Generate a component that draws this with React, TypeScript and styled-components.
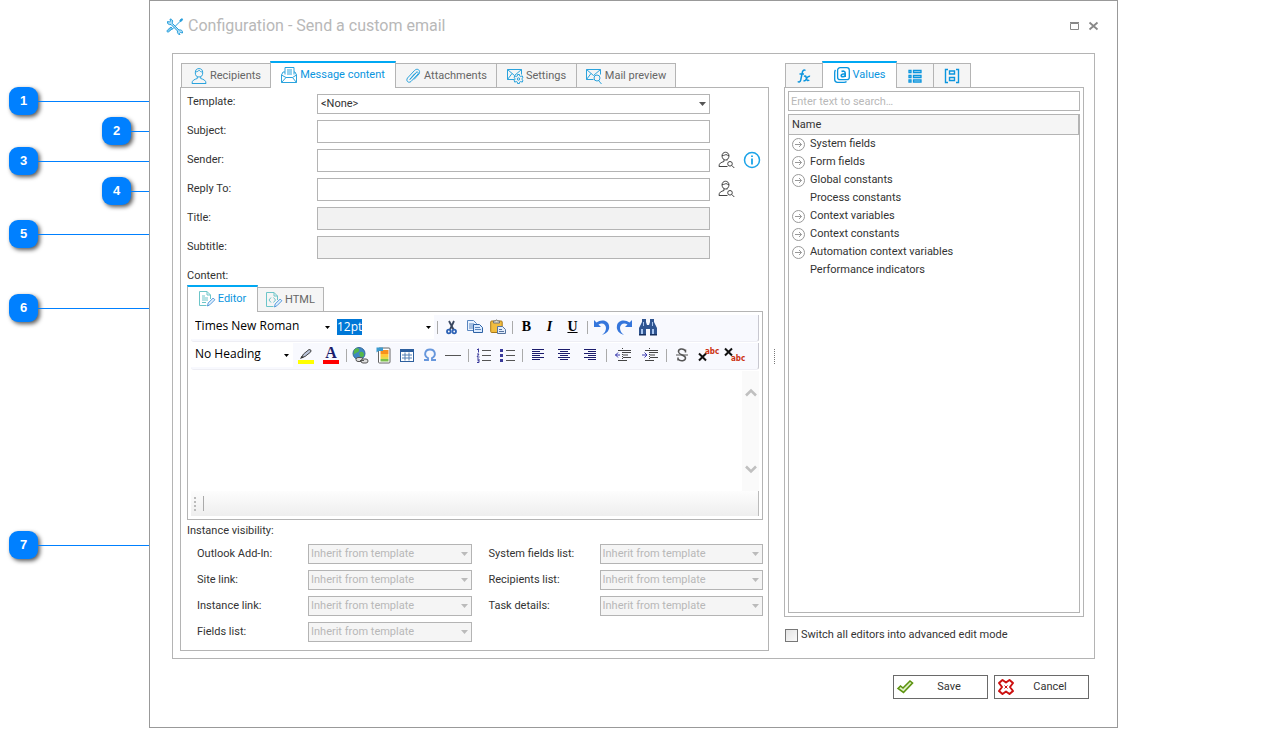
import React from "react";
import styled, { createGlobalStyle, css } from "styled-components";

const accent = "#00a8f3";
const blue = "#0a95de";
const line = "#b4b4b4";
const muted = "#b8b8b8";
const ui = 'Roboto, "DejaVu Sans Condensed", sans-serif';
const editorFont = '"Open Sans", "Noto Sans", sans-serif';

const GlobalStyle = createGlobalStyle`
  *, *::before, *::after { box-sizing: border-box; }
  body { margin: 0; background: #fff; color: #333; font: 11px/16px ${ui}; }
  button, input, select, textarea { font: inherit; color: inherit; margin: 0; border-radius: 0; outline: none; }
  svg { display: block; flex: none; overflow: visible; }
`;

/* ---------- page ---------- */
const Page = styled.div`
  display: flex;
  align-items: flex-start;
`;
const Rail = styled.ol`
  width: 149px;
  flex: none;
  margin: 0;
  padding: 86px 0 0;
  list-style: none;
`;
const Callout = styled.li<{ $indent?: boolean; $gap?: number }>`
  display: flex;
  align-items: center;
  height: 30px;
  margin-top: ${(p) => p.$gap || 0}px;
  padding-left: ${(p) => (p.$indent ? 102 : 9)}px;
  &::after {
    content: "";
    flex: 1;
    height: 1px;
    background: #0080ff;
  }
`;
const Badge = styled.span`
  width: 29px;
  height: 28px;
  border-radius: 9px;
  background: #0080ff;
  box-shadow: 2px 2px 4px rgba(0, 0, 0, 0.65);
  color: #fff;
  font: bold 13px/28px "Liberation Sans", sans-serif;
  text-align: center;
`;

/* ---------- dialog ---------- */
const Dialog = styled.main`
  flex: 1;
  min-width: 0;
  margin-right: 147px;
  padding: 0 22px;
  border: 1px solid #999;
`;
const TitleBar = styled.header`
  display: flex;
  align-items: center;
  height: 52px;
  margin: 0 -8px 0 -6px;
  padding-bottom: 2px;
`;
const Title = styled.h1`
  flex: 1;
  margin: 0 0 0 4px;
  font-size: 16px;
  line-height: 24px;
  font-weight: normal;
  color: ${muted};
`;
const WindowButton = styled.button`
  width: 19px;
  height: 18px;
  padding: 0;
  border: 0;
  background: none;
  display: grid;
  place-items: center;
`;
const Frame = styled.div`
  display: flex;
  padding: 7px 10px 7px 7px;
  border: 1px solid ${line};
`;
const Column = styled.section<{ $fixed?: boolean }>`
  display: flex;
  flex-direction: column;
  min-width: 0;
  ${(p) => (p.$fixed ? "width: 300px; flex: none;" : "flex: 1;")}
`;
const Splitter = styled.div`
  width: 15px;
  flex: none;
  display: flex;
  align-items: center;
  padding-left: 5px;
  &::before {
    content: "";
    width: 1px;
    height: 15px;
    background: repeating-linear-gradient(#777 0 1px, transparent 1px 2px);
  }
`;

/* ---------- tabs ---------- */
const Tabs = styled.div`
  display: flex;
  align-items: flex-end;
  height: 27px;
  margin-bottom: -1px;
  padding-left: 1px;
`;
const Tab = styled.button<{ $w: number; $active?: boolean }>`
  display: flex;
  align-items: center;
  justify-content: center;
  gap: 3px;
  width: ${(p) => p.$w}px;
  height: 25px;
  padding: 0;
  border: 1px solid ${line};
  background: #f5f5f5;
  color: #666;
  white-space: nowrap;
  & + & { margin-left: -1px; }
  ${(p) =>
    p.$active &&
    css`
      position: relative;
      height: 27px;
      padding-bottom: 2px;
      border-top: 2px solid ${accent};
      border-bottom: 0;
      background: #fff;
      color: ${blue};
    `}
`;
const Panel = styled.div`
  display: flex;
  flex-direction: column;
  flex: 1;
  border: 1px solid ${line};
`;
const FormPanel = styled(Panel)`
  padding: 5px 5px 8px 6px;
`;
const ValuesPanel = styled(Panel)`
  gap: 3px;
  padding: 3px;
`;

/* ---------- form ---------- */
const FormRow = styled.div<{ $compact?: boolean }>`
  display: grid;
  grid-template-columns: 130px 1fr 53px;
  align-items: start;
  height: ${(p) => (p.$compact ? 27 : 29)}px;
  padding-top: ${(p) => (p.$compact ? 1 : 0)}px;
`;
const Label = styled.label`
  line-height: 20px;
  white-space: nowrap;
`;
const FormLabel = styled(Label)<{ $compact?: boolean }>`
  line-height: ${(p) => (p.$compact ? 15 : 21)}px;
`;
const TextBox = styled.input`
  min-width: 0;
  width: 100%;
  height: 23px;
  padding: 0 4px;
  border: 1px solid ${line};
  background: #fff;
  &:disabled { background: #f2f2f2; }
`;
const SearchBox = styled(TextBox)`
  height: 20px;
  padding: 0 2px;
  &::placeholder { color: ${muted}; opacity: 1; }
`;
const RowActions = styled.div`
  display: flex;
  gap: 8px;
  padding: 2px 0 0 7px;
`;
const IconButton = styled.button`
  width: 18px;
  height: 18px;
  padding: 0;
  border: 0;
  background: none;
`;
const SelectBox = styled.div`
  display: grid;
  align-items: center;
  min-width: 0;
  & > * { grid-area: 1 / 1; }
  & > svg { justify-self: end; margin-right: 4px; pointer-events: none; }
`;
const Select = styled.select`
  appearance: none;
  width: 100%;
  height: 20px;
  padding: 0 14px 0 3px;
  border: 1px solid ${line};
  background: #fff;
  &:disabled { background: #f5f5f5; color: ${muted}; opacity: 1; padding-left: 2px; }
`;
const ContentLabel = styled(Label)`
  line-height: 16px;
  padding: 3px 0 1px;
`;
const VisibilityLabel = styled.div`
  line-height: 16px;
  padding: 3px 0 5px;
`;
const VisibilityGrid = styled.div`
  display: grid;
  grid-template-columns: 1fr 1fr;
  column-gap: 17px;
  padding-left: 10px;
`;
const VisibilityColumn = styled.div`
  display: grid;
  grid-template-columns: 111px 1fr;
  gap: 6px 0;
  align-content: start;
`;

/* ---------- editor ---------- */
const EditorTabs = styled(Tabs)`
  padding-left: 0;
`;
const EditorPanel = styled(Panel)`
  flex: none;
  padding: 3px;
`;
const Toolbar = styled.div`
  display: flex;
  align-items: center;
  height: 27px;
  padding-bottom: 2px;
  margin-bottom: 1px;
  background: #f8f9fe;
  border-right: 1px solid #c8c8d0;
  border-bottom: 1px solid #eeeef4;
  border-radius: 0 0 3px 3px;
  color: #000;
  font: 12px/18px ${editorFont};
`;
const ToolSelectBox = styled(SelectBox)<{ $w: number }>`
  width: ${(p) => p.$w}px;
  flex: none;
`;
const ToolSelect = styled.select`
  appearance: none;
  width: 100%;
  height: 24px;
  padding: 0 0 2px 4px;
  border: 0;
  background: #fff;
`;
const SizeBox = styled.span`
  width: 100px;
  display: flex;
  align-items: center;
  justify-content: space-between;
  height: 24px;
  padding: 0 3px;
  background: #fff;
`;
const SizeInput = styled.input`
  width: 25px;
  height: 16px;
  padding: 0;
  border: 0;
  background: #0078d7;
  color: #fff;
`;
const Sep = styled.i`
  width: 6px;
  flex: none;
  display: grid;
  justify-content: center;
  &::before { content: ""; width: 1px; height: 13px; background: #aaa; }
`;
const Tool = styled.button<{ $w?: number }>`
  width: ${(p) => p.$w || 23}px;
  height: 24px;
  flex: none;
  padding: 0;
  border: 0;
  background: none;
  display: grid;
  place-items: center;
`;
const Glyph = styled(Tool)<{ $kind?: "i" | "u" }>`
  font: ${(p) => (p.$kind === "i" ? "italic " : "")}bold 14px/20px "Liberation Serif", serif;
  text-decoration: ${(p) => (p.$kind === "u" ? "underline" : "none")};
`;
const Writing = styled.div`
  display: flex;
  height: 120px;
`;
const TextArea = styled.textarea`
  flex: 1;
  border: 0;
  resize: none;
  padding: 4px;
  background: #fff;
`;
const ScrollStrip = styled.div`
  width: 17px;
  display: flex;
  flex-direction: column;
  justify-content: space-between;
  align-items: center;
  padding: 17px 0;
  background: #fafafa;
`;
const StatusBar = styled.div`
  display: flex;
  align-items: center;
  gap: 7px;
  height: 25px;
  padding-left: 3px;
  border-right: 1px solid #bbb;
  background: linear-gradient(#fdfdfd, #eee);
  &::before {
    content: "";
    width: 2px;
    height: 14px;
    background: repeating-linear-gradient(#bbb 0 2px, transparent 2px 4px);
  }
  &::after { content: ""; width: 1px; height: 15px; background: #aaa; }
`;

/* ---------- values tree ---------- */
const TreeBox = styled.div`
  flex: 1;
  border: 1px solid ${line};
`;
const Tree = styled.table`
  width: 100%;
  border-spacing: 0;
  th {
    height: 20px;
    padding: 0 0 0 3px;
    border-right: 1px solid ${line};
    border-bottom: 1px solid ${line};
    background: #f5f5f5;
    font-weight: normal;
    text-align: left;
  }
  td { height: 18px; padding: 1px 3px; }
`;
const Node = styled.div<{ $leaf?: boolean }>`
  display: flex;
  align-items: center;
  gap: 5px;
  padding-left: ${(p) => (p.$leaf ? 18 : 0)}px;
`;
const CheckRow = styled.label`
  display: flex;
  align-items: center;
  gap: 3px;
  height: 34px;
  padding: 2px 0 0 1px;
`;
const CheckBox = styled.input`
  appearance: none;
  width: 13px;
  height: 13px;
  border: 1px solid #777;
  background: linear-gradient(135deg, #e4e4e4, #fafafa);
`;
const Footer = styled.footer`
  display: flex;
  justify-content: flex-end;
  gap: 6px;
  padding: 16px 6px 28px;
`;
const ActionButton = styled.button`
  display: grid;
  grid-template-columns: 16px 1fr;
  align-items: center;
  width: 95px;
  height: 24px;
  padding: 0 2px 0 3px;
  border: 1px solid #6a6a6a;
  background: #fff;
`;

/* ---------- icons ---------- */
const Svg = ({ s = 16, w, c = "#2aa3dd", sw = 1, vb, children }: any) => (
  <svg width={w || s} height={s} viewBox={vb || `0 0 ${w || s} ${s}`} fill="none" stroke={c} strokeWidth={sw} aria-hidden="true">
    {children}
  </svg>
);
const Arrow = ({ c = "#555" }: { c?: string }) => (
  <svg width="7" height="4" aria-hidden="true"><path d="M0 0h7L3.5 4z" fill={c} /></svg>
);
const SmallArrow = () => (
  <svg width="5" height="3" aria-hidden="true"><path d="M0 0h5L2.5 3z" fill="#000" /></svg>
);
const Wrench = () => (
  <Svg s={18} c="#2a9fdc">
    <path d="M6.500 6.500 13 13c2-.5 4 .5 3.500 3l-2-.5-1 1 .5 1c-2 0-3-1.500-2.500-3.500L5 7.500c-2 .5-4-.5-3.500-3l2 .5 1-1-.5-2c2 0 3 1.500 2.500 3.500z" fill="#a9dcf5" />
    <path d="M16.500 2 14.500 2.500 14 4.500 9.500 9M8 10.500 5.500 13" />
    <path d="M6.500 11.500 3 14.500c-1.500 1.500-2.500 0-1.500-1.500L5 10z" fill="#7cc8ee" />
    <path d="m14 4.500 2.500-2.500" strokeWidth="2" />
  </Svg>
);
const Person = () => (
  <Svg>
    <ellipse cx="8" cy="4.800" rx="3.700" ry="4.200" />
    <path d="M4.500 4c2-.3 3-1 3.600-1.800C9 3.400 10 4 11.500 4M6.300 8.500v2C3.500 11.500 1 12 1 15.500h14c0-3.500-2.500-4-5.300-5v-2" />
  </Svg>
);
const PersonSearch = () => (
  <Svg s={18} c="#444">
    <path d="M5 5c0-5 7-5 7 0M5 5c.3 2.500 1.500 4 3.500 4S11.700 7.500 12 5M5 4.500c2 0 3-.5 4-1 1 .6 2 1 3 1M7 8.500V10.500c-3 1-5 1.500-5 5h8.500M10 8.500v1" />
    <circle cx="13" cy="12.800" r="2.300" /><path d="m14.800 14.500 2.500 2.500" />
  </Svg>
);
const MailDoc = () => (
  <Svg>
    <path d="M4 7.500V.5h9v7M6 3h5M6 5h5M6 7h5M4 5H2L.5 8v7.500h15V8L14 5h-1M.5 8 5 10.500h6.500L15.500 8M.5 15.500l4.500-5M15.500 15.500l-4-5" />
  </Svg>
);
const Clip = () => (
  <Svg>
    <path d="M5 11 11 4.500c1.500-1.500 3 .3 2 1.500l-7 7.500c-2.500 2-5.500-.5-3.500-3.500L9.500 2.500c3-3 6.500 0 4.500 3.500l-5 5.500M4.500 12 11.500 4.500M6.500 9.500l3-3.500" />
  </Svg>
);
const MailFrame = ({ children }: any) => (
  <Svg>
    <path d="M7.500 11.500H.5v-10h14V6.500M.5 1.500l7 6 7-6M.5 11.500l4.500-6" />
    {children}
  </Svg>
);
const MailGear = () => (
  <MailFrame>
    <circle cx="11.500" cy="11" r="1.200" />
    <path d="M10.500 6.500h2v1.300l1.400.7 1.300-.7.8 1.700-1 .8v1.400l1 .8-.8 1.700-1.300-.7-1.400.7v1.300h-2v-1.300l-1.400-.7-1.300.7-.8-1.700 1-.8v-1.400l-1-.8.8-1.700 1.300.7 1.400-.7z" fill="#f5f5f5" fillOpacity="0" />
  </MailFrame>
);
const MailSearch = () => (
  <MailFrame>
    <circle cx="11" cy="10" r="3" /><path d="m12.500 12.500 3 3.500" />
  </MailFrame>
);
const Info = () => (
  <Svg s={18} c="#1ba3e8" sw={1.500}>
    <circle cx="9" cy="9" r="7.500" /><path d="M9 7.500V13.500M9 4.500V6" strokeWidth="1.800" />
  </Svg>
);
const Fx = () => (
  <Svg s={14} c={blue} sw={1.500}>
    <path d="M8.500 1.500c-2-1.500-3 .5-3.400 3L3.700 11c-.5 2-1.700 2.500-3 1.500M2.500 5h4.500M7 7.500c1.500-1.500 2 0 2.300 1.500.4 2 1 3.500 3 2M13 7.500c-2-1-3 1-4 3-.7 1.500-1.500 1.500-2.500 1" />
  </Svg>
);
const ValuesIcon = () => (
  <Svg c={blue} sw={1.300}>
    <rect x="3.600" y=".7" width="11.700" height="12" rx="2.500" />
    <path d="M1.500 3C.7 4 .7 4.500.7 5.500v7c0 2 1 2.800 2.800 2.800H10c1.500 0 2-.2 2.500-.8" />
    <path d="M7.500 4.500c1.500-.8 3.700-.5 3.700 1.500v4M11.200 6.800c-2 0-4 0-4 1.700 0 1.800 3 1.500 4 0" strokeWidth="1.600" />
  </Svg>
);
const ListIcon = () => (
  <Svg s={14} c={blue} sw={1.300}>
    <path d="M1 1.500h2v2H1zM1 6.500h2v2H1zM1 11h2v2H1zM5.500 1.500h7.500v2H5.500zM5.500 6.500h7.500v2H5.500zM5.500 11h7.500v2H5.500z" />
  </Svg>
);
const BracketIcon = () => (
  <Svg s={16} c={blue} sw={1.400}>
    <path d="M4 1.500H1.500v13H4M12 1.500h2.500v13H12M5.500 3h5v3h-5zM5.500 9.500h5v3h-5z" />
  </Svg>
);
const EditDoc = ({ code }: { code?: boolean }) => (
  <Svg c="#6cc5c9">
    <path d="M7.500 14.500H.5V.5h7.500l3.500 3.500v4M8 .5V4h3.500" />
    <path d={code ? "M5 5.500 3 8l2 2.500M7.500 5.500l2 2.500-2 2.500" : "M3 5h3M3 7h6M3 9h6M3 11.500h4"} />
    <path d="m8.500 15 .7-3 5-5 1.600 1.800-5 5z" stroke="#5599dd" fill="#e3f2fd" />
  </Svg>
);
const CircleArrow = () => (
  <Svg s={13} c="#999">
    <circle cx="6.500" cy="6.500" r="6" /><path d="M3 6.500h6.500M7 4l2.500 2.500L7 9" />
  </Svg>
);
const Chevron = ({ down }: { down?: boolean }) => (
  <svg width="12" height="9" aria-hidden="true">
    <path d={down ? "M1 1.500 6 6.500l5-5" : "M1 7.500 6 2.500l5 5"} fill="none" stroke="#c0c0c0" strokeWidth="2.600" />
  </svg>
);
const Cut = () => (
  <Svg s={15} c="#39465f" sw={1.300}>
    <path d="M5 1l4.500 8.500M10 1 6 9.500" strokeWidth="1.800" />
    <circle cx="4.800" cy="11.500" r="1.800" stroke="#2d62b5" strokeWidth="1.800" /><circle cx="10.200" cy="11.500" r="1.800" stroke="#2d62b5" strokeWidth="1.800" />
  </Svg>
);
const Copy = () => (
  <Svg c="#5a86c0">
    <path d="M.5 1.500h6l3 3v7h-9z" fill="#eaf3ff" /><path d="M2 5h5M2 7h5M2 9h4" />
    <path d="M6.500 5.500h6l3 3v5h-9z" fill="#dcebff" stroke="#2d62a5" /><path d="M8 8.500h5M8 10.500h6" />
  </Svg>
);
const Paste = () => (
  <Svg c="#a87918">
    <rect x=".7" y="2" width="11.500" height="11.500" rx="1" fill="#f2bd3f" />
    <path d="M3.500 4V2h2c.5-1.500 1.500-1.500 2 0h2v2z" fill="#e6e1cf" stroke="#777" />
    <path d="M7.500 7.500h5l3 3v4h-8z" fill="#e3edfb" stroke="#56749f" /><path d="M9 10.500h3M9 12.500h5" stroke="#56749f" />
  </Svg>
);
const Undo = ({ flip }: { flip?: boolean }) => (
  <svg width="17" height="17" viewBox="0 0 17 17" aria-hidden="true">
    <path transform={flip ? "matrix(-1 0 0 1 17 0)" : undefined} d="M1 1v7h7L5.500 5.500C9 3 13 5 13 9c0 3-1.500 5-4 7 5-1.500 8-5 7-9.500C15 1 8 0 3.500 3.500z" fill="#3576dc" />
  </svg>
);
const Binoculars = () => (
  <svg width="20" height="18" viewBox="0 0 20 18" aria-hidden="true">
    <path d="M4 1h4v3l1 3h2l1-3V1h4v3l3 6v7h-7v-6H8v6H1v-7l3-6z" fill="#2f5591" />
    <path d="M3 11h2v5H3zM14 11h2v5h-2zM5 4h1v4H5zM14 4h1v4h-1z" fill="#a9c6ef" />
    <path d="M1 16h7v1.500H1zM12 16h7v1.500h-7z" fill="#16305e" />
  </svg>
);
const Highlighter = () => (
  <svg width="16" height="17" viewBox="0 0 16 17" aria-hidden="true">
    <path d="M0 13h16v4H0z" fill="#ff0" />
    <path d="M3.500 10.500 5.500 7l5.500-4.500 2 .7-.3 1.800L7 9.500z" fill="#b8c2d8" stroke="#444" /><path d="M2 12l1.500-3L6 10.500z" fill="#333" />
  </svg>
);
const FontColour = () => (
  <svg width="16" height="17" viewBox="0 0 16 17" aria-hidden="true">
    <path d="M0 13h16v4H0z" fill="#f00" />
    <text x="8" y="11" textAnchor="middle" fontFamily="Liberation Serif, serif" fontWeight="bold" fontSize="16" fill="#1b1b6b">A</text>
  </svg>
);
const Globe = () => (
  <Svg s={17} c="#555">
    <circle cx="7" cy="6.500" r="6" fill="#3f86c4" stroke="#34679a" />
    <path d="M3 2c3-2 5 0 4 2S2 6 2 8 1 4 3 2zM8 5c3-1 4 1 4 3s-3 3-4 1-1-3 0-4z" fill="#55b848" stroke="none" />
    <rect x="4" y="10.500" width="7" height="4" rx="2" fill="#ddd" /><rect x="9" y="12" width="7" height="4" rx="2" fill="#ddd" /><path d="M8 13.500h4" />
  </Svg>
);
const Template = () => (
  <Svg s={17} w={16} c="#666">
    <rect x="2.500" y="1" width="11.500" height="15" rx="1" fill="#fff" />
    <path d="M4.500 3h8v4h-8z" fill="#f7911b" stroke="none" /><path d="M4.500 7h8v3h-8z" fill="#ffc93a" stroke="none" /><path d="M4.500 10h8v2h-8z" fill="#e6d94a" stroke="none" /><path d="M4.500 12h8v2.500h-8z" fill="#7cbf4a" stroke="none" />
    <path d="M.5.500h6.500V4H2.500L.5 5.500z" fill="#3b9bd0" stroke="none" />
  </Svg>
);
const TableIcon = () => (
  <Svg s={14} c="#2d5f9e">
    <rect x=".5" y="1.500" width="13" height="12" fill="#fff" /><path d="M1 3h12" strokeWidth="2" /><path d="M2 7h10M2 10h10M5 4.500v8M9 4.500v8" stroke="#5580b4" />
  </Svg>
);
const Omega = () => (
  <Svg s={14} c="#6797dc" sw={1.900}>
    <path d="M1 12h4v-2C.5 8 1.500 1.500 7 1.500s6.500 6.500 2 8.500v2h4" />
  </Svg>
);
const List = ({ numbered }: { numbered?: boolean }) => (
  <Svg s={15} c="#555">
    <path d="M6 2.500h9M6 7.500h9M6 12.500h9" />
    {numbered ? (
      <path d="M2.500.500v4M1 1.500h1.500M1 6h2l-2 3h2.500M1 11h2v3.500H1M1.500 12.700H3" stroke="#3a3a9a" />
    ) : (
      <path d="M0 1h3v3H0zM0 6h3v3H0zM0 11h3v3H0z" fill="#3a3a9a" stroke="none" />
    )}
  </Svg>
);
const alignPaths = {
  left: "M0 1.500h12M0 3.500h8M0 5.500h12M0 7.500h8M0 9.500h12M0 11.500h8",
  center: "M0 1.500h12M2 3.500h8M0 5.500h12M2 7.500h8M0 9.500h12M2 11.500h8",
  right: "M0 1.500h12M4 3.500h8M0 5.500h12M4 7.500h8M0 9.500h12M4 11.500h8",
};
const Align = ({ to }: { to: keyof typeof alignPaths }) => (
  <Svg s={14} w={12} c="#1b1b6b"><path d={alignPaths[to]} /></Svg>
);
const Indent = ({ out }: { out?: boolean }) => (
  <Svg s={14} w={16} c="#444">
    <path d="M3 2.500h13M8 4.500h8M8 7h5M8 9.500h8M3 12.500h9" /><path d="M7.500 0v14" strokeDasharray="1 1" />
    <path d={out ? "M0 7h5M3 4.500 .7 7 3 9.500" : "M0 7h5M2.500 4.500 5 7 2.500 9.500"} stroke="#3a3ab0" />
  </Svg>
);
const ScriptIcon = ({ sub }: { sub?: boolean }) => (
  <svg width="20" height="16" viewBox="0 0 20 16" aria-hidden="true">
    <path d={sub ? "M1 1.500l7 7M8 1.500l-7 7" : "M1 6.500l7 7M8 6.500l-7 7"} stroke="#111" strokeWidth="2" />
    <text x="7" y={sub ? 14 : 7} fontFamily="DejaVu Sans Condensed, sans-serif" fontWeight="bold" fontSize="8" fill="#cc3311">abc</text>
  </svg>
);
const Strike = () => (
  <Svg s={14} c="#555">
    <path d="M10.500 4.500V1.500M10.500 3C8-.5 3 1 3.500 4s7 3 7 6-5 4-7.500 1M3 9.500v3" strokeWidth="1.500" /><path d="M1 7h12" />
  </Svg>
);
const Check = () => (
  <Svg c="#5d9310" sw={1.600}>
    <path d="M1 9.500 3.500 7 6 9 13 2 15.500 4 6.500 13.500z" fill="#dcefc2" />
  </Svg>
);
const Cross = () => (
  <Svg c="#cc1010" sw={2}>
    <path d="M4.500 1 8 3.500 11.500 1 15 4l-3 4 3 4-3.500 3L8 12.500 4.500 15 1 12l3-4-3-4z" fill="#fff" strokeLinejoin="round" />
    <path d="m6.500 6.500 3 3M9.500 6.500l-3 3" strokeWidth="1" />
  </Svg>
);

/* ---------- content ---------- */
const fields = [
  { id: "subject", label: "Subject:" },
  { id: "sender", label: "Sender:", lookup: true, info: true },
  { id: "reply", label: "Reply To:", lookup: true },
  { id: "title", label: "Title:", disabled: true },
  { id: "subtitle", label: "Subtitle:", disabled: true },
];
const visibility = [
  ["Outlook Add-In:", "Site link:", "Instance link:", "Fields list:"],
  ["System fields list:", "Recipients list:", "Task details:"],
];
const nodes = [
  { name: "System fields" },
  { name: "Form fields" },
  { name: "Global constants" },
  { name: "Process constants", leaf: true },
  { name: "Context variables" },
  { name: "Context constants" },
  { name: "Automation context variables" },
  { name: "Performance indicators", leaf: true },
];

export default function App() {
  return (
    <>
      <GlobalStyle />
      <Page>
        <Rail>
          <Callout><Badge>1</Badge></Callout>
          <Callout $indent><Badge>2</Badge></Callout>
          <Callout><Badge>3</Badge></Callout>
          <Callout $indent><Badge>4</Badge></Callout>
          <Callout $gap={13}><Badge>5</Badge></Callout>
          <Callout $gap={44}><Badge>6</Badge></Callout>
          <Callout $gap={207}><Badge>7</Badge></Callout>
        </Rail>
        <Dialog>
          <TitleBar>
            <Wrench />
            <Title>Configuration - Send a custom email</Title>
            <WindowButton aria-label="Maximize">
              <Svg s={8} w={9} c="#888"><path d="M.5 1.500h8v6h-8zM0 .500h9" /></Svg>
            </WindowButton>
            <WindowButton aria-label="Close">
              <Svg s={8} w={9} c="#888" sw={1.800}><path d="M.5.500l8 7M8.500.500l-8 7" /></Svg>
            </WindowButton>
          </TitleBar>
          <Frame>
            <Column>
              <Tabs role="tablist">
                <Tab role="tab" $w={90}><Person />Recipients</Tab>
                <Tab role="tab" $w={126} $active aria-selected><MailDoc />Message content</Tab>
                <Tab role="tab" $w={102}><Clip />Attachments</Tab>
                <Tab role="tab" $w={81}><MailGear />Settings</Tab>
                <Tab role="tab" $w={100}><MailSearch />Mail preview</Tab>
              </Tabs>
              <FormPanel>
                <FormRow $compact>
                  <FormLabel $compact htmlFor="template">Template:</FormLabel>
                  <SelectBox>
                    <Select id="template"><option>&lt;None&gt;</option></Select>
                    <Arrow />
                  </SelectBox>
                </FormRow>
                {fields.map((f) => (
                  <FormRow key={f.id}>
                    <FormLabel htmlFor={f.id}>{f.label}</FormLabel>
                    <TextBox id={f.id} type="text" disabled={f.disabled} />
                    {f.lookup && (
                      <RowActions>
                        <IconButton aria-label="Select person"><PersonSearch /></IconButton>
                        {f.info && <IconButton aria-label="Information"><Info /></IconButton>}
                      </RowActions>
                    )}
                  </FormRow>
                ))}
                <ContentLabel htmlFor="content">Content:</ContentLabel>
                <EditorTabs role="tablist">
                  <Tab role="tab" $w={71} $active aria-selected><EditDoc />Editor</Tab>
                  <Tab role="tab" $w={67}><EditDoc code />HTML</Tab>
                </EditorTabs>
                <EditorPanel>
                  <Toolbar>
                    <ToolSelectBox $w={143}>
                      <ToolSelect aria-label="Font"><option>Times New Roman</option></ToolSelect>
                      <SmallArrow />
                    </ToolSelectBox>
                    <SizeBox><SizeInput aria-label="Size" defaultValue="12pt" /><SmallArrow /></SizeBox>
                    <Sep />
                    <Tool aria-label="Cut"><Cut /></Tool>
                    <Tool aria-label="Copy"><Copy /></Tool>
                    <Tool aria-label="Paste"><Paste /></Tool>
                    <Sep />
                    <Glyph>B</Glyph>
                    <Glyph $kind="i">I</Glyph>
                    <Glyph $kind="u">U</Glyph>
                    <Sep />
                    <Tool aria-label="Undo"><Undo /></Tool>
                    <Tool aria-label="Redo"><Undo flip /></Tool>
                    <Tool aria-label="Find"><Binoculars /></Tool>
                  </Toolbar>
                  <Toolbar>
                    <ToolSelectBox $w={102}>
                      <ToolSelect aria-label="Heading"><option>No Heading</option></ToolSelect>
                      <SmallArrow />
                    </ToolSelectBox>
                    <Tool $w={25} aria-label="Highlight"><Highlighter /></Tool>
                    <Tool $w={25} aria-label="Font colour"><FontColour /></Tool>
                    <Sep />
                    <Tool aria-label="Link"><Globe /></Tool>
                    <Tool aria-label="Template field"><Template /></Tool>
                    <Tool aria-label="Table"><TableIcon /></Tool>
                    <Tool aria-label="Symbol"><Omega /></Tool>
                    <Tool $w={24} aria-label="Rule"><Svg c="#555"><path d="M0 8.500h16" /></Svg></Tool>
                    <Sep />
                    <Tool $w={24} aria-label="Numbered list"><List numbered /></Tool>
                    <Tool $w={24} aria-label="Bulleted list"><List /></Tool>
                    <Sep />
                    <Tool $w={26} aria-label="Align left"><Align to="left" /></Tool>
                    <Tool $w={26} aria-label="Align centre"><Align to="center" /></Tool>
                    <Tool $w={26} aria-label="Align right"><Align to="right" /></Tool>
                    <Sep />
                    <Tool $w={27} aria-label="Outdent"><Indent out /></Tool>
                    <Tool $w={27} aria-label="Indent"><Indent /></Tool>
                    <Sep />
                    <Tool $w={26} aria-label="Strikethrough"><Strike /></Tool>
                    <Tool $w={26} aria-label="Superscript"><ScriptIcon /></Tool>
                    <Tool $w={26} aria-label="Subscript"><ScriptIcon sub /></Tool>
                  </Toolbar>
                  <Writing>
                    <TextArea id="content" />
                    <ScrollStrip><Chevron /><Chevron down /></ScrollStrip>
                  </Writing>
                  <StatusBar />
                </EditorPanel>
                <VisibilityLabel>Instance visibility:</VisibilityLabel>
                <VisibilityGrid>
                  {visibility.map((column, i) => (
                    <VisibilityColumn key={i}>
                      {column.map((name) => (
                        <React.Fragment key={name}>
                          <Label htmlFor={name}>{name}</Label>
                          <SelectBox>
                            <Select id={name} disabled><option>Inherit from template</option></Select>
                            <Arrow c="#bbb" />
                          </SelectBox>
                        </React.Fragment>
                      ))}
                    </VisibilityColumn>
                  ))}
                </VisibilityGrid>
              </FormPanel>
            </Column>
            <Splitter />
            <Column $fixed>
              <Tabs role="tablist">
                <Tab role="tab" $w={38} aria-label="Functions"><Fx /></Tab>
                <Tab role="tab" $w={75} $active aria-selected><ValuesIcon />Values</Tab>
                <Tab role="tab" $w={38} aria-label="List"><ListIcon /></Tab>
                <Tab role="tab" $w={38} aria-label="Blocks"><BracketIcon /></Tab>
              </Tabs>
              <ValuesPanel>
                <SearchBox type="text" aria-label="Search" placeholder="Enter text to search…" />
                <TreeBox>
                  <Tree>
                    <thead><tr><th>Name</th></tr></thead>
                    <tbody>
                      {nodes.map((n) => (
                        <tr key={n.name}>
                          <td><Node $leaf={n.leaf}>{!n.leaf && <CircleArrow />}{n.name}</Node></td>
                        </tr>
                      ))}
                    </tbody>
                  </Tree>
                </TreeBox>
              </ValuesPanel>
              <CheckRow><CheckBox type="checkbox" />Switch all editors into advanced edit mode</CheckRow>
            </Column>
          </Frame>
          <Footer>
            <ActionButton><Check />Save</ActionButton>
            <ActionButton><Cross />Cancel</ActionButton>
          </Footer>
        </Dialog>
      </Page>
    </>
  );
}
